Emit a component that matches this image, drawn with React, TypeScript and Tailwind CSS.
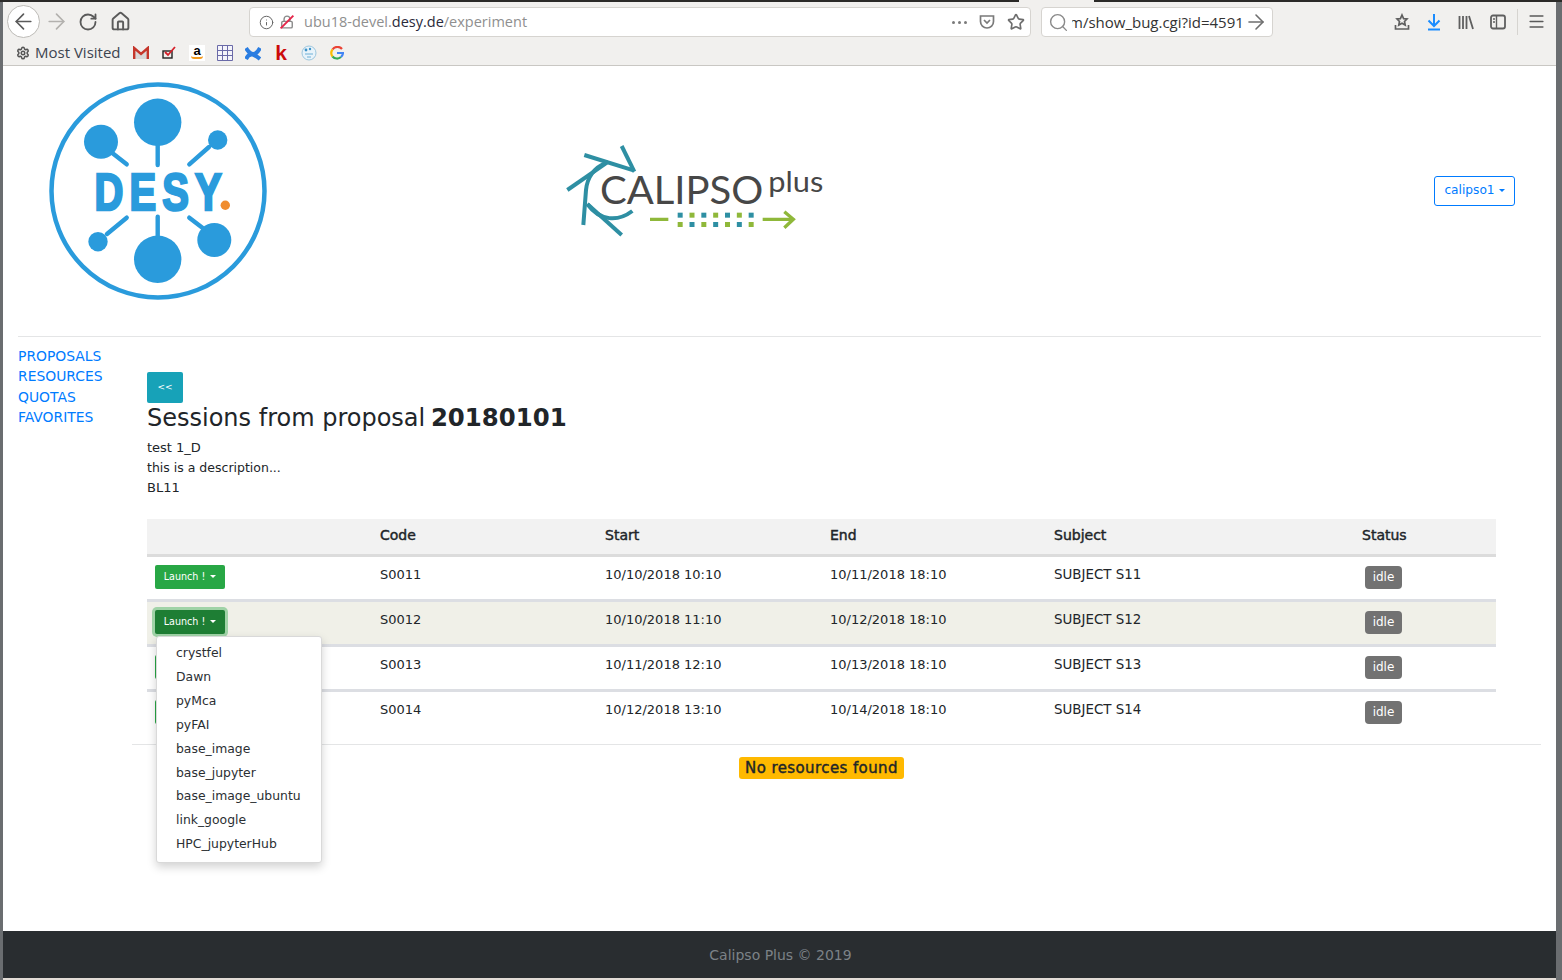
import React from 'react';
import { ArrowLeft, ArrowRight, RotateCw, Home, Info, Lock, Star, Search, Menu, Settings } from 'lucide-react';

const sessions = [
  { code: 'S0011', start: '10/10/2018 10:10', end: '10/11/2018 18:10', subject: 'SUBJECT S11' },
  { code: 'S0012', start: '10/10/2018 11:10', end: '10/12/2018 18:10', subject: 'SUBJECT S12' },
  { code: 'S0013', start: '10/11/2018 12:10', end: '10/13/2018 18:10', subject: 'SUBJECT S13' },
  { code: 'S0014', start: '10/12/2018 13:10', end: '10/14/2018 18:10', subject: 'SUBJECT S14' },
];

const launchers = ['crystfel', 'Dawn', 'pyMca', 'pyFAI', 'base_image', 'base_jupyter', 'base_image_ubuntu', 'link_google', 'HPC_jupyterHub'];

const DesyLogo = () => (
  <svg width="218" height="218" viewBox="0 0 218 218" className="shrink-0">
    <circle cx="109" cy="109" r="106.5" fill="none" stroke="#2a9bdc" strokeWidth="4.5" />
    <g fill="#2a9bdc">
      <circle cx="108.7" cy="40.3" r="23.7" />
      <circle cx="108.7" cy="177.3" r="23.7" />
      <circle cx="52" cy="59.7" r="17" />
      <circle cx="168.7" cy="58" r="9.7" />
      <circle cx="49" cy="159.7" r="9.7" />
      <circle cx="165.3" cy="158" r="17" />
    </g>
    <g stroke="#2a9bdc" strokeWidth="4.4" strokeLinecap="round">
      <path d="M108.7 62V83" />
      <path d="M108.7 134.7V155" />
      <path d="M62 70L77.7 82.3" />
      <path d="M160 65L140.3 82.3" />
      <path d="M58 152L77.7 135.7" />
      <path d="M155 147L140.3 135.7" />
    </g>
    <text
      transform="translate(45.5 128) scale(0.76 1)"
      fill="#2a9bdc"
      stroke="#2a9bdc"
      strokeWidth="2.6"
      letterSpacing="8"
      className="font-['Liberation_Sans',sans-serif] font-bold text-[52.6px]"
    >
      DESY
    </text>
    <circle cx="176.3" cy="123.3" r="4.7" fill="#f08c2e" />
  </svg>
);

const CalipsoLogo = () => (
  <svg width="290" height="120" viewBox="0 0 870 360" className="shrink-0">
    <g fill="none" stroke="#2e8fa3" strokeWidth="12">
      <path d="M215 48L253 125" />
      <path d="M103 75L253 122" />
      <path d="M52 180L175 95" />
      <path d="M100 285L108 180C112 140 135 112 165 100" />
      <path d="M215 315L112 222" />
      <path d="M112 222C150 275 205 275 247 243" />
    </g>
    <text x="150" y="222" fill="#474747" textLength="490" lengthAdjust="spacingAndGlyphs" className="font-['Lato',sans-serif] text-[116px]">CALIPSO</text>
    <text x="655" y="185" fill="#474747" textLength="165" lengthAdjust="spacingAndGlyphs" className="font-['Lato',sans-serif] text-[88px]">plus</text>
    <path d="M300 268H355M638 268H725" stroke="#8fb83a" strokeWidth="10" fill="none" />
    <path d="M703 245L730 268L703 293" stroke="#8fb83a" strokeWidth="10" fill="none" />
    {[0, 1, 2, 3, 4, 5, 6].map(i => (
      <g key={i}>
        <rect x={383 + i * 35.5} y="248" width="15" height="15" fill={i % 2 ? '#8fb83a' : '#2e8fa3'} />
        <rect x={383 + i * 35.5} y="276" width="15" height="15" fill={i % 2 ? '#2e8fa3' : '#8fb83a'} />
      </g>
    ))}
  </svg>
);

const Favicon = ({ children }: { children: React.ReactNode }) => (
  <span className="w-[28px] flex justify-center items-center">{children}</span>
);

const Bookmarks = () => (
  <div className="flex items-center h-[24px] font-['Open_Sans',sans-serif] text-[15px] text-[#3d4450]">
    <Settings size={14} strokeWidth={2.6} className="ml-[13px] mr-[5px] text-[#555]" />
    <span className="w-[92px] pb-[2px]">Most Visited</span>
    <Favicon>
      <svg width="16" height="14" viewBox="0 0 16 14">
        <path d="M1 2L8 8L15 2V13H1Z" fill="#d8d8d8" />
        <path d="M1.2 13V2L8 8L14.8 2V13" fill="none" stroke="#c5362b" strokeWidth="2.4" />
      </svg>
    </Favicon>
    <Favicon>
      <svg width="15" height="14" viewBox="0 0 15 14">
        <rect x="1" y="5" width="9" height="7" fill="none" stroke="#222" strokeWidth="1.4" />
        <path d="M3 6L6 9L13 1" fill="none" stroke="#d5202a" strokeWidth="1.8" />
      </svg>
    </Favicon>
    <Favicon>
      <span className="w-[16px] h-[16px] bg-white flex flex-col items-center leading-[11px] font-['Liberation_Sans',sans-serif] font-bold text-[13px] text-black">
        a
        <span className="block w-[12px] h-[3px] rounded-b-full border-b-2 border-[#f39a1d]" />
      </span>
    </Favicon>
    <Favicon>
      <svg width="16" height="16" viewBox="0 0 16 16">
        <path d="M.5 .5H15.5V15.5H.5ZM.5 5.5H15.5M.5 10.5H15.5M5.5 .5V15.5M10.5 .5V15.5" fill="#f4f4fa" stroke="#6a6aa8" />
      </svg>
    </Favicon>
    <Favicon>
      <svg width="16" height="15" viewBox="0 0 16 15">
        <path d="M1 13C5 5 10 9 15 13M1 2C6 10 11 10 15 2" fill="none" stroke="#2a7de1" strokeWidth="4" />
      </svg>
    </Favicon>
    <Favicon>
      <span className="font-['Liberation_Sans',sans-serif] font-black text-[21px] leading-[20px] text-[#cc0a0a]">k</span>
    </Favicon>
    <Favicon>
      <svg width="16" height="16" viewBox="0 0 16 16">
        <circle cx="8" cy="8" r="7" fill="#e8f3fa" stroke="#9cc6de" />
        <circle cx="5" cy="5" r="1.4" fill="#3d93c8" />
        <circle cx="9" cy="4" r="1.2" fill="#3d93c8" />
        <path d="M4 9H12M6 12H10" stroke="#6fb0d6" />
      </svg>
    </Favicon>
    <Favicon>
      <svg width="14" height="14" viewBox="0 0 14 14">
        <path d="M12 3A6 6 0 0 0 2.5 3.5" fill="none" stroke="#ea4335" strokeWidth="2.2" />
        <path d="M2.5 3.5A6 6 0 0 0 2.5 10.5" fill="none" stroke="#fbbc05" strokeWidth="2.2" />
        <path d="M2.5 10.5A6 6 0 0 0 11 11" fill="none" stroke="#34a853" strokeWidth="2.2" />
        <path d="M11 11A6 6 0 0 0 13 7H7" fill="none" stroke="#4285f4" strokeWidth="2.2" />
      </svg>
    </Favicon>
  </div>
);

const BrowserChrome = () => (
  <div className="shrink-0 h-[64px] bg-[#f1f0ee] border-b border-[#c9c7c3]">
    <div className="flex items-center h-[39px] text-[#5a5a5a]">
      <div className="ml-[4px] w-[33px] h-[33px] rounded-full bg-white border border-[#bdbbb7] flex items-center justify-center">
        <ArrowLeft size={25} strokeWidth={1.6} />
      </div>
      <ArrowRight size={25} strokeWidth={1.6} className="ml-[4px] text-[#b3b1ae]" />
      <RotateCw size={20} strokeWidth={2.2} className="ml-[9px]" />
      <Home size={21} strokeWidth={2.2} className="ml-[12px]" />
      <div className="ml-[118px] w-[782px] h-[30px] mt-[1px] rounded-[4px] bg-white border border-[#d6d4d0] flex items-center pl-[9px] pr-[5px] font-['Open_Sans',sans-serif] text-[14.5px] text-[#8f8f8f]">
        <Info size={15} strokeWidth={1.6} className="text-[#666]" />
        <span className="relative ml-[5px] mr-[9px] w-[16px] flex justify-center">
          <Lock size={14} strokeWidth={2.4} className="text-[#8a8a8a]" />
          <span className="absolute left-[-1px] top-[6px] w-[18px] h-[2px] bg-[#e5264a] -rotate-45" />
        </span>
        <span>ubu18-devel.<span className="text-[#2a2a3a]">desy.de</span>/experiment</span>
        <span className="ml-auto flex items-center gap-[3px] mr-[12px]">
          <span className="w-[3px] h-[3px] rounded-full bg-[#7a7a7a]" />
          <span className="w-[3px] h-[3px] rounded-full bg-[#7a7a7a]" />
          <span className="w-[3px] h-[3px] rounded-full bg-[#7a7a7a]" />
        </span>
        <svg width="16" height="16" viewBox="0 0 16 16" className="mr-[12px]">
          <path d="M1.5 2H14.5V7.5A6.5 6.5 0 0 1 1.5 7.5Z M5 6L8 9L11 6" fill="none" stroke="#7a7a7a" strokeWidth="1.7" />
        </svg>
        <Star size={18} strokeWidth={2.2} className="text-[#6e6e6e]" />
      </div>
      <div className="ml-[10px] w-[232px] h-[30px] mt-[1px] rounded-[4px] bg-white border border-[#d6d4d0] flex items-center pl-[6px] pr-[4px] font-['Open_Sans',sans-serif] text-[15px] text-[#333]">
        <Search size={21} strokeWidth={1.6} className="text-[#8a8a8a] mr-[3px] shrink-0" />
        <span className="overflow-hidden whitespace-nowrap">
          <span className="block ml-[-3px]">m/show_bug.cgi?id=4591</span>
        </span>
        <ArrowRight size={24} strokeWidth={1.6} className="ml-auto text-[#6e6e6e] shrink-0" />
      </div>
      <svg width="16" height="18" viewBox="0 0 16 18" className="ml-[121px]">
        <path d="M8 2L9.6 5.6L13 6L10.5 8.5L11.2 12L8 10.2L4.8 12L5.5 8.5L3 6L6.4 5.6Z M1.5 12V16H14.5V12" fill="none" stroke="#5f5f5f" strokeWidth="1.7" />
      </svg>
      <svg width="18" height="18" viewBox="0 0 18 18" className="ml-[15px]">
        <path d="M9 1V13M3.5 7.5L9 13L14.5 7.5M3 16.5H15" fill="none" stroke="#1a8cff" strokeWidth="2" />
      </svg>
      <svg width="16" height="16" viewBox="0 0 16 16" className="ml-[15px]">
        <path d="M1.5 2V15M5 2V15M8.5 2V15M11 2L15 15" fill="none" stroke="#5f5f5f" strokeWidth="1.8" />
      </svg>
      <svg width="16" height="16" viewBox="0 0 16 16" className="ml-[16px]">
        <rect x="1" y="1.5" width="14" height="13" rx="2" fill="none" stroke="#5f5f5f" strokeWidth="1.8" />
        <path d="M6.5 2V14M3 5H5M3 8H5" stroke="#5f5f5f" strokeWidth="1.4" />
      </svg>
      <div className="ml-[11px] w-px h-[26px] bg-[#d6d4d0]" />
      <Menu size={19} strokeWidth={2} className="ml-[9px]" />
    </div>
    <Bookmarks />
  </div>
);

const LaunchButton = ({ active, label }: { active?: boolean; label: boolean }) => (
  <button
    className={`h-[24px] w-[70px] rounded-[2px] text-[9.6px] text-white flex items-center justify-center gap-[5px] ${
      active ? 'bg-[#1e7e34] ring-[3px] ring-[#28a745]/40' : 'bg-[#28a745]'
    }`}
  >
    {label && 'Launch !'}
    {label && <span className="border-x-[3px] border-x-transparent border-t-[3px] border-t-white" />}
  </button>
);

export default function App() {
  return (
    <div className="h-[980px] overflow-hidden bg-[#6a6d70] font-['DejaVu_Sans',sans-serif] text-[13px] leading-[20px] text-[#212529]">
      <div className="h-[2px] bg-[#2b2a28] flex">
        <div className="ml-[1019px] w-[75px] bg-[#f1f0ee]" />
      </div>
      <div className="ml-[3px] mr-[6px] h-[978px] flex flex-col bg-white">
        <BrowserChrome />

        <div className="flex items-center h-[270px] shrink-0">
          <div className="ml-[46px] mt-[-20px]"><DesyLogo /></div>
          <div className="ml-[283px] mt-[-23px]"><CalipsoLogo /></div>
          <button className="ml-auto mr-[41px] mt-[-20px] h-[30px] w-[81px] pb-[2px] rounded-[3px] border border-[#007bff] text-[12.2px] text-[#007bff] flex items-center justify-center gap-[4px]">
            calipso1
            <span className="border-x-[3px] border-x-transparent border-t-[3px] border-t-[#007bff]" />
          </button>
        </div>

        <div className="mx-[15px] h-px bg-[#e4e5e6] shrink-0" />

        <div className="flex flex-1 min-h-0">
          <nav className="w-[114px] ml-[15px] pt-[9px] shrink-0 flex flex-col text-[13.9px] text-[#007bff] leading-[20.4px]">
            <a>PROPOSALS</a>
            <a>RESOURCES</a>
            <a>QUOTAS</a>
            <a>FAVORITES</a>
          </nav>
          <div className="flex-1 min-w-0 mr-[15px] flex flex-col">
            <div className="pl-[15px] pr-[45px] pt-[35px]">
              <button className="w-[36px] h-[31px] rounded-[2px] bg-[#17a2b8] text-white text-[9px] pb-[2px] flex items-center justify-center">&lt;&lt;</button>
              <h1 className="mt-[1px] text-[24px] leading-[28px]">Sessions from proposal <b className="ml-[-2px] text-[24.4px]">20180101</b></h1>
              <div className="mt-[6px]">
                <p>test 1_D</p>
                <p className="text-[12.5px]">this is a description...</p>
                <p>BL11</p>
              </div>
              <table className="mt-[21px] w-full table-fixed border-collapse text-left">
                <thead>
                  <tr className="bg-[#f2f2f2] h-[36px] border-b-[3px] border-[#dcdcdc] text-[14px] [-webkit-text-stroke:0.45px]">
                    <th className="w-[233px]"></th>
                    <th className="w-[225px] pb-[2px] font-normal">Code</th>
                    <th className="w-[225px] pb-[2px] font-normal">Start</th>
                    <th className="w-[224px] pb-[2px] font-normal">End</th>
                    <th className="w-[308px] pb-[2px] font-normal">Subject</th>
                    <th className="pb-[2px] font-normal">Status</th>
                  </tr>
                </thead>
                <tbody>
                  {sessions.map((s, i) => (
                    <tr key={s.code} className={`h-[45px] align-top border-b-[3px] border-[#dcdee3] last:border-b-0 ${i === 1 ? 'bg-[#f0f0e8]' : ''}`}>
                      <td className="pl-[8px] pt-[8px] relative">
                        <LaunchButton active={i === 1} label={i < 2} />
                        {i === 1 && (
                          <ul className="absolute z-10 left-[9px] top-[34px] w-[166px] h-[227px] pt-[5px] bg-white rounded-[3px] border border-[#d9d9d9] shadow-[0_4px_10px_rgba(0,0,0,0.18)]">
                            {launchers.map(name => (
                              <li key={name} className="h-[23.85px] pl-[19px] flex items-center text-[12.4px] text-[#2b2f33]">{name}</li>
                            ))}
                          </ul>
                        )}
                      </td>
                      <td className="pt-[8px]">{s.code}</td>
                      <td className="pt-[8px]">{s.start}</td>
                      <td className="pt-[8px]">{s.end}</td>
                      <td className="pt-[8px] text-[13.4px]">{s.subject}</td>
                      <td className="pt-[9px]">
                        <span className="ml-[3px] inline-flex items-center justify-center w-[37px] h-[23px] rounded-[4px] bg-[#727272] text-white text-[12px]">idle</span>
                      </td>
                    </tr>
                  ))}
                </tbody>
              </table>
            </div>
            <div className="mt-[9px] h-px bg-[#e4e5e6]" />
            <div className="mt-[12px] flex justify-center pr-[30px]">
              <span className="h-[22px] w-[165px] rounded-[3px] bg-[#ffb900] text-[#212529] text-[15px] tracking-[0.4px] [-webkit-text-stroke:0.4px] flex items-center justify-center">No resources found</span>
            </div>
          </div>
        </div>

        <footer className="h-[47px] shrink-0 bg-[#292d30] flex items-center justify-center pl-[2px] text-[14px] text-[#7c8287]">
          Calipso Plus © 2019
        </footer>
        <div className="h-[2px] shrink-0 bg-[#e2dcd6]" />
      </div>
    </div>
  );
}
